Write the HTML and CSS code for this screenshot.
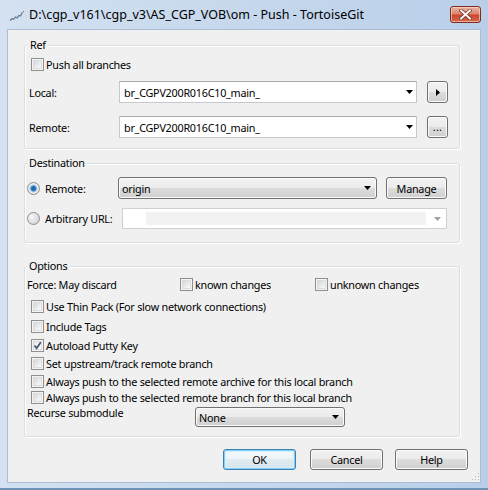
FILE: index.html
```html
<!DOCTYPE html>
<html>
<head>
<meta charset="utf-8">
<link rel="stylesheet" href="styles.css">
</head>
<body>
<div class="window">
  <div class="titlebar">
    <svg class="app-icon" width="16" height="16" viewBox="0 0 16 16">
      <path d="M1 13.5 L3 11.5 L4.5 12.5 L6.5 10 L8 11 L10 8.5 L11.5 9 L13 6" fill="none" stroke="#6a7f97" stroke-width="1.3"/>
      <path d="M12 7 L14.5 3 L15 4.5 Z" fill="#3d4b5c"/>
      <path d="M13.2 5.2 L14.6 2.8" stroke="#fff" stroke-width="0.8"/>
    </svg>
    <span class="title">D:\cgp_v161\cgp_v3\AS_CGP_VOB\om - Push - TortoiseGit</span>
    <div class="close-btn">
      <svg width="13" height="11" viewBox="0 0 13 11">
        <path d="M2 1.5 L11 9.5 M11 1.5 L2 9.5" stroke="#6b2418" stroke-width="3.4" stroke-linecap="square"/>
        <path d="M2 1.5 L11 9.5 M11 1.5 L2 9.5" stroke="#fff" stroke-width="2" stroke-linecap="square"/>
      </svg>
    </div>
  </div>

  <div class="client">
    <section class="group group-ref">
      <span class="group-title">Ref</span>
      <div class="check-row pad-check"><span class="checkbox"></span><span>Push all branches</span></div>
      <div class="field-row row-local">
        <span class="field-label">Local:</span>
        <div class="combo"><span class="combo-text">br_CGPV200R016C10_main_</span><span class="arrow"><svg width="7" height="4" viewBox="0 0 7 4"><path d="M0 0H7L3.5 4Z" fill="#000"/></svg></span></div>
        <div class="btn small-btn"><svg width="4" height="7" viewBox="0 0 4 7"><path d="M0 0L4 3.5L0 7Z" fill="#000"/></svg></div>
      </div>
      <div class="field-row row-remote">
        <span class="field-label">Remote:</span>
        <div class="combo"><span class="combo-text">br_CGPV200R016C10_main_</span><span class="arrow"><svg width="7" height="4" viewBox="0 0 7 4"><path d="M0 0H7L3.5 4Z" fill="#000"/></svg></span></div>
        <div class="btn small-btn dots-btn">...</div>
      </div>
    </section>

    <section class="group group-dest">
      <span class="group-title">Destination</span>
      <div class="field-row">
        <span class="radio-label radio-label-remote"><span class="radio checked"></span>Remote:</span>
        <div class="select"><span class="combo-text">origin</span><span class="arrow"><svg width="7" height="4" viewBox="0 0 7 4"><path d="M0 0H7L3.5 4Z" fill="#000"/></svg></span></div>
        <div class="btn manage-btn">Manage</div>
      </div>
      <div class="field-row row-url">
        <span class="radio-label radio-label-url"><span class="radio"></span>Arbitrary URL:</span>
        <div class="combo combo-disabled"><span class="disabled-fill"></span><span class="arrow"><svg width="7" height="4" viewBox="0 0 7 4"><path d="M0 0H7L3.5 4Z" fill="#a0a0a0"/></svg></span></div>
      </div>
    </section>

    <section class="group group-options">
      <span class="group-title">Options</span>
      <div class="check-row force-row">
        <span class="force-label">Force: May discard</span>
        <span class="force-opt"><span class="checkbox"></span><span>known changes</span></span>
        <span class="force-opt"><span class="checkbox"></span><span>unknown changes</span></span>
      </div>
      <div class="check-row pad-check mt-6"><span class="checkbox"></span><span>Use Thin Pack (For slow network connections)</span></div>
      <div class="check-row pad-check mt-4"><span class="checkbox"></span><span>Include Tags</span></div>
      <div class="check-row pad-check mt-3"><span class="checkbox checked"><svg width="11" height="11" viewBox="0 0 11 11"><path d="M2.5 5.5 L4.6 8.2 L8.8 2.2" fill="none" stroke="#3f5376" stroke-width="1.7"/></svg></span><span>Autoload Putty Key</span></div>
      <div class="check-row pad-check mt-2"><span class="checkbox"></span><span>Set upstream/track remote branch</span></div>
      <div class="check-row pad-check mt-2"><span class="checkbox"></span><span>Always push to the selected remote archive for this local branch</span></div>
      <div class="check-row pad-check"><span class="checkbox"></span><span>Always push to the selected remote branch for this local branch</span></div>
      <div class="recurse-row">
        <span class="recurse-label">Recurse submodule</span>
        <div class="select select-recurse"><span class="combo-text">None</span><span class="arrow"><svg width="7" height="4" viewBox="0 0 7 4"><path d="M0 0H7L3.5 4Z" fill="#000"/></svg></span></div>
      </div>
    </section>

    <div class="button-row">
      <div class="btn dialog-btn default-btn">OK</div>
      <div class="btn dialog-btn btn-cancel">Cancel</div>
      <div class="btn dialog-btn btn-help">Help</div>
    </div>
    <span class="grip"></span>
  </div>
</div>
</body>
</html>
```

FILE: styles.css
```css
* { box-sizing: border-box; }
html, body { margin: 0; padding: 0; }
body {
  width: 488px;
  height: 490px;
  overflow: hidden;
  font-family: "Noto Sans", "Open Sans", sans-serif;
  font-size: 10.8px;
  letter-spacing: -0.25px;
  color: #000;
  background: #fff;
}

.window {
  width: 488px;
  height: 490px;
  display: flex;
  flex-direction: column;
  background: linear-gradient(to right, #d3e1f1, #c4d6ec 60%, #b9cfe9);
  border-bottom: 2px solid #6f93b8;
}

.titlebar {
  height: 30px;
  flex: none;
  display: flex;
  align-items: flex-start;
  padding: 0 7px 0 9px;
}
.app-icon { margin-top: 7px; flex: none; }
.title {
  margin-left: 4px;
  margin-top: 6px;
  font-size: 12.5px;
  letter-spacing: 0;
  line-height: 18px;
  white-space: nowrap;
}
.close-btn {
  margin-left: auto;
  margin-top: 6px;
  width: 31px;
  height: 17px;
  border: 1px solid #7d2c20;
  border-radius: 3px;
  background: linear-gradient(#eab3a4, #dc8670 45%, #c9482e 55%, #d66a4c);
  box-shadow: inset 0 0 0 1px rgba(255, 220, 210, 0.6);
  display: flex;
  align-items: center;
  justify-content: center;
}

.client {
  position: relative;
  flex: 1;
  margin: 0 8px 6px;
  background: #f0f0f0;
  box-shadow: 0 0 0 1px #a9bdd5;
  padding: 15px 20px 0 16px;
  display: flex;
  flex-direction: column;
}

.group {
  position: relative;
  border: 1px solid #d5dfe5;
  border-radius: 3px;
  box-shadow: inset 1px 1px 0 #fff, 1px 1px 0 #fff;
  flex: none;
}
.group-title {
  position: absolute;
  top: -9px;
  left: 2px;
  padding: 0 2px;
  line-height: 16px;
  background: #f0f0f0;
}
.group-ref { padding: 10px 11px 10px 4px; }
.group-ref .group-title { left: 3px; }
.group-dest { margin-top: 14px; padding: 13px 12px 13px 2px; }
.group-options { margin-top: 23px; padding: 9px 12px 9px 2px; }

.check-row {
  display: flex;
  align-items: center;
  height: 16px;
  white-space: nowrap;
}
.pad-check { padding-left: 2px; }
.group-options .pad-check { padding-left: 4px; }
.mt-6 { margin-top: 6px; }
.mt-4 { margin-top: 4px; }
.mt-3 { margin-top: 3px; }
.mt-2 { margin-top: 2px; }

.checkbox {
  width: 13px;
  height: 13px;
  flex: none;
  margin-right: 2px;
  border: 1px solid #8e8f8f;
  background: linear-gradient(135deg, #c9ccd1, #f7f7f7 75%);
  box-shadow: inset 0 0 0 1px #f4f4f4, inset 0 0 0 2px #dcdcdc;
  display: flex;
  align-items: center;
  justify-content: center;
}
.checkbox.checked { background: linear-gradient(135deg, #dfe1e4, #fbfbfb 75%); }

.field-row {
  display: flex;
  align-items: center;
  height: 22px;
}
.row-local { margin-top: 9px; }
.row-remote { margin-top: 13px; }
.field-label { width: 90px; flex: none; }

.combo {
  flex: 1;
  height: 22px;
  display: flex;
  align-items: center;
  background: #fff;
  border: 1px solid #c5c8cd;
  border-top-color: #a6a9ae;
  padding-left: 4px;
  white-space: nowrap;
}
.combo-text { flex: 1; }
.arrow {
  width: 14px;
  height: 100%;
  flex: none;
  display: flex;
  align-items: center;
  justify-content: center;
  margin-left: auto;
}

.btn {
  border: 1px solid #707070;
  border-radius: 3px;
  background: linear-gradient(#f2f2f2, #ebebeb 50%, #dddddd 50%, #cfcfcf);
  box-shadow: inset 0 0 0 1px #fbfbfb;
  display: flex;
  align-items: center;
  justify-content: center;
  flex: none;
}
.small-btn { width: 21px; height: 22px; margin-left: 10px; }
.dots-btn { align-items: flex-end; line-height: 12px; padding-bottom: 4px; letter-spacing: 0.3px; }

.radio-label {
  display: flex;
  align-items: center;
  flex: none;
  white-space: nowrap;
}
.radio-label-remote { width: 91px; }
.radio-label-url { width: 95px; }
.radio {
  width: 13px;
  height: 13px;
  border-radius: 50%;
  border: 1px solid #8e8f8f;
  background: radial-gradient(circle at 35% 35%, #f7f7f7, #d3d5d8 80%);
  margin-right: 5px;
  flex: none;
  position: relative;
}
.radio.checked {
  background: radial-gradient(circle, #1d5a9a 0, #2e7bbf 2.2px, #a9cbe8 3.4px, #f2f2f2 4.5px, #d7d9dc 80%);
}

.select {
  flex: 1;
  height: 22px;
  display: flex;
  align-items: center;
  border: 1px solid #707070;
  border-radius: 3px;
  background: linear-gradient(#f2f2f2, #ebebeb 50%, #dddddd 50%, #cfcfcf);
  box-shadow: inset 0 0 0 1px #fbfbfb;
  padding-left: 3px;
}
.select .arrow { width: 18px; }
.manage-btn { width: 61px; height: 22px; margin-left: 9px; }

.row-url { margin-top: 9px; height: 21px; }
.combo-disabled {
  height: 21px;
  border-color: #d0d0d0;
  padding: 3px 0 3px 23px;
  align-items: stretch;
}
.disabled-fill { flex: 1; background: #f2f2f2; margin-right: 2px; }
.combo-disabled .arrow { width: 18px; height: auto; }

.force-row { padding-left: 0; }
.force-label { width: 153px; flex: none; }
.force-opt { display: flex; align-items: center; width: 135px; flex: none; }

.recurse-row {
  display: flex;
  align-items: flex-start;
  height: 20px;
  margin-top: 2px;
}
.recurse-label { width: 168px; flex: none; line-height: 14px; margin-top: -1px; }
.select-recurse { flex: none; width: 150px; height: 20px; }

.button-row {
  display: flex;
  justify-content: flex-end;
  margin-top: 12px;
  margin-right: -8px;
}
.dialog-btn { width: 73px; height: 21px; }
.btn-cancel { margin-left: 14px; }
.btn-help { margin-left: 12px; }
.default-btn {
  border-color: #3c7fb1;
  box-shadow: inset 0 0 0 1px #7fd2f6, inset 0 0 0 2px #d6eefa;
  background: linear-gradient(#f4f9fc, #edf4f8 50%, #e1ebf1 50%, #d6e3ea);
}

.grip {
  position: absolute;
  right: 1px;
  bottom: 2px;
  width: 8px;
  height: 8px;
  background:
    radial-gradient(circle, #b9b9b9 0.8px, transparent 1px) 0 0 / 3px 3px;
  clip-path: polygon(100% 0, 100% 100%, 0 100%);
}
```
